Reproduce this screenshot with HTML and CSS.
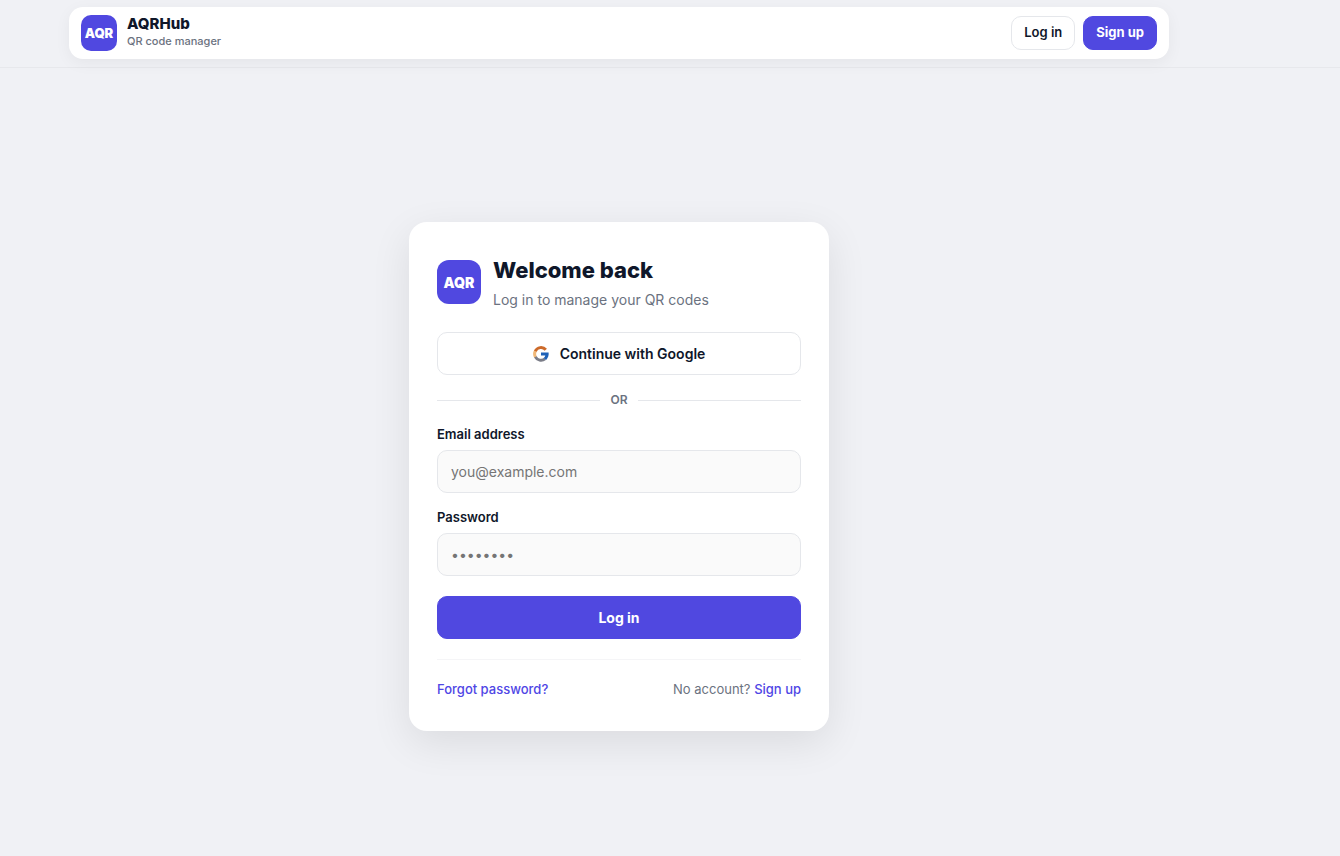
FILE: index.html
```html
<!DOCTYPE html>
<html lang="en">
<head>
  <meta charset="UTF-8">
  <meta name="viewport" content="width=device-width, initial-scale=1.0">
  <title>Log in - AQRHub</title>
  <link rel="stylesheet" href="styles.css">
</head>
<body>

<header class="site-header">
  <nav class="navbar">
    <a class="brand" href="#">
      <span class="logo">AQR</span>
      <span class="brand-text">
        <span class="brand-name">AQRHub</span>
        <span class="brand-tagline">QR code manager</span>
      </span>
    </a>
    <div class="nav-actions">
      <a class="nav-button" href="#">Log in</a>
      <a class="nav-button primary" href="#">Sign up</a>
    </div>
  </nav>
</header>

<main class="auth-page">
  <div class="card">
    <div class="card-header">
      <span class="logo logo-large">AQR</span>
      <div>
        <h1>Welcome back</h1>
        <p class="subtitle">Log in to manage your QR codes</p>
      </div>
    </div>

    <button type="button" class="button google-button">
      <svg class="google-icon" viewBox="0 0 16 16" aria-hidden="true">
        <path fill="none" stroke="#f0b878" stroke-width="3" d="M2.6 4.6A6.3 6.3 0 0 0 2.6 11.2"/>
        <path fill="none" stroke="#cc6a2a" stroke-width="3" d="M2.3 5.2A6.3 6.3 0 0 1 12.8 3.8"/>
        <path fill="none" stroke="#7b7d88" stroke-width="3" d="M2.4 10.8A6.3 6.3 0 0 0 12 12.9"/>
        <path fill="#1f62b8" d="M8 6.6h7.6c.4 2.9-.5 5.5-2.5 7.4l-2.4-1.9c.8-.6 1.3-1.4 1.6-2.5H8z"/>
      </svg>
      Continue with Google
    </button>

    <div class="divider">OR</div>

    <form action="#" method="post">
      <label for="email">Email address</label>
      <input type="email" id="email" name="email" placeholder="you@example.com" required>

      <label for="password">Password</label>
      <input type="password" id="password" name="password" placeholder="••••••••" required>

      <button type="submit" class="button submit-button">Log in</button>
    </form>

    <div class="card-footer">
      <a href="#">Forgot password?</a>
      <span>No account? <a href="#">Sign up</a></span>
    </div>
  </div>
</main>

</body>
</html>
```

FILE: styles.css
```css
* {
  box-sizing: border-box;
  margin: 0;
  padding: 0;
}

body {
  min-height: 100vh;
  display: flex;
  flex-direction: column;
  font-family: Inter, "Liberation Sans", sans-serif;
  font-size: 14px;
  color: #0f172a;
  background: #f0f1f5;
}

a {
  text-decoration: none;
  color: #4f46e5;
}

.site-header {
  padding: 7px 102px 8px 0;
  border-bottom: 1px solid #e7e8ec;
}

.navbar {
  max-width: 1100px;
  margin: 0 auto;
  padding: 8px 12px;
  display: flex;
  align-items: center;
  justify-content: space-between;
  background: #fff;
  border-radius: 14px;
  box-shadow: 0 4px 16px rgba(0, 0, 0, 0.05);
}

.brand {
  display: flex;
  align-items: center;
  gap: 10px;
}

.logo {
  width: 36px;
  height: 36px;
  display: flex;
  align-items: center;
  justify-content: center;
  flex-shrink: 0;
  border-radius: 10px;
  background: #5048e0;
  color: #fff;
  font-size: 13px;
  font-weight: 900;
}

.logo-large {
  width: 44px;
  height: 44px;
  border-radius: 12px;
  font-size: 14px;
}

.brand-text {
  display: flex;
  flex-direction: column;
  padding-bottom: 2px;
}

.brand-name {
  font-size: 15px;
  line-height: 18px;
  font-weight: 800;
  color: #0f172a;
}

.brand-tagline {
  font-size: 11px;
  line-height: 16px;
  font-weight: 500;
  color: #6b7280;
}

.nav-actions {
  display: flex;
  gap: 8px;
}

.nav-button {
  padding: 7px 12px 9px;
  border: 1px solid #e5e7eb;
  border-radius: 10px;
  background: #fff;
  color: #0f172a;
  font-size: 13px;
  line-height: 16px;
  font-weight: 600;
}

.nav-button.primary {
  background: #5048e0;
  border-color: #5048e0;
  color: #fff;
  font-weight: 700;
}

.auth-page {
  flex: 1;
  display: flex;
  align-items: center;
  justify-content: center;
  padding: 53px 126px 24px 24px;
}

.card {
  width: 100%;
  max-width: 420px;
  padding: 32px 28px;
  background: #fff;
  border-radius: 18px;
  box-shadow: 0 12px 40px rgba(0, 0, 0, 0.09);
}

.card-header {
  display: flex;
  align-items: center;
  gap: 12px;
  margin-bottom: 22px;
}

h1 {
  font-size: 22px;
  line-height: 32px;
  font-weight: 800;
}

.subtitle {
  margin-top: 4px;
  line-height: 20px;
  color: #6b7280;
}

.button {
  width: 100%;
  padding: 12px;
  border: 1px solid #e5e7eb;
  border-radius: 10px;
  background: #fff;
  color: #0f172a;
  font-family: inherit;
  font-size: 14px;
  line-height: 17px;
  font-weight: 600;
  cursor: pointer;
}

.google-button {
  display: flex;
  align-items: center;
  justify-content: center;
  gap: 11px;
}

.google-icon {
  width: 16px;
  height: 16px;
}

.divider {
  display: flex;
  align-items: center;
  gap: 10px;
  margin: 16px 0 15px;
  color: #6b7280;
  font-size: 12px;
  line-height: 18px;
  font-weight: 600;
}

.divider::before,
.divider::after {
  content: "";
  flex: 1;
  height: 1px;
  background: #e5e7eb;
}

label {
  display: block;
  margin-bottom: 6px;
  font-size: 13px;
  line-height: 20px;
  font-weight: 600;
}

input {
  width: 100%;
  height: 43px;
  margin-bottom: 14px;
  padding: 0 13px;
  border: 1px solid #e5e7eb;
  border-radius: 10px;
  background: #fafafa;
  color: #0f172a;
  font-family: inherit;
  font-size: 14px;
}

input::placeholder {
  color: #757575;
}

.submit-button {
  margin-top: 6px;
  background: #5048e0;
  border-color: #5048e0;
  color: #fff;
  font-weight: 700;
}

.card-footer {
  display: flex;
  justify-content: space-between;
  margin-top: 20px;
  padding-top: 19px;
  border-top: 1px solid #f5f5f7;
  color: #6b7280;
  font-size: 13px;
  line-height: 20px;
}

.card-footer a {
  font-weight: 500;
}
```
